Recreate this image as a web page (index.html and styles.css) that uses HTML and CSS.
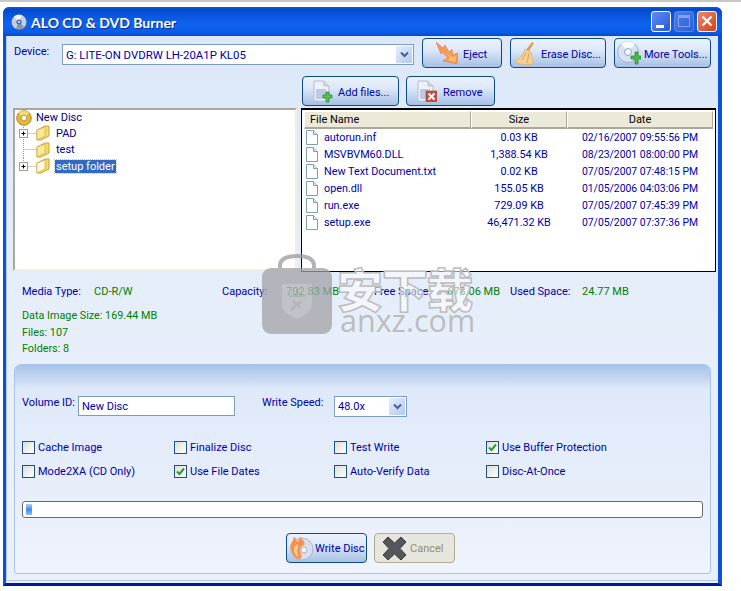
FILE: index.html
```html
<!DOCTYPE html>
<html lang="en">
<head>
<meta charset="utf-8">
<title>ALO CD &amp; DVD Burner</title>
<link rel="stylesheet" href="styles.css">
</head>
<body>
<div class="strip"></div>
<div class="window">
  <div class="titlebar">
    <svg class="title-icon" width="16" height="16" viewBox="0 0 16 16"><circle cx="8" cy="8" r="7.5" fill="#c9ccd4"/><path d="M8 8L3 3A7 7 0 0 1 11 1.5Z" fill="#f4f4f8"/><path d="M8 8L13 13A7 7 0 0 1 5 14.5Z" fill="#8f95a6"/><circle cx="8" cy="8" r="2.6" fill="#3f6fd0"/><circle cx="8" cy="8" r="1.1" fill="#e8eefa"/></svg>
    <span class="title-text">ALO CD &amp; DVD Burner</span>
    <div class="win-btns">
      <span class="win-btn win-min"><span class="min-bar"></span></span>
      <span class="win-btn win-max"><span class="max-box"></span></span>
      <span class="win-btn win-close"><svg width="12" height="12" viewBox="0 0 12 12"><path d="M1.5 1.5L10.5 10.5M10.5 1.5L1.5 10.5" stroke="#fff" stroke-width="2.2"/></svg></span>
    </div>
  </div>
  <div class="client">
    <div class="device-row">
      <span class="device-label">Device:</span>
      <div class="select device-select"><span class="select-value">G: LITE-ON DVDRW LH-20A1P KL05</span><span class="select-arrow"><svg width="9" height="7" viewBox="0 0 9 7"><path d="M1 1.5L4.5 5L8 1.5" fill="none" stroke="#4d6185" stroke-width="2"/></svg></span></div>
      <button class="btn btn-eject"><svg width="22" height="22" viewBox="0 0 22 22"><path d="M0 0L7 6L9 3L13 10L16 7.500L17 13L22 11L21 22L7 19L12 15.500L6 10L5 12Z" fill="#f59a58" stroke="#ee7c5a" stroke-width=".7"/><path d="M8 9L13 13L17 15L20 14L19.500 20L11 18L14 15.500Z" fill="#f9c05c"/></svg><span>Eject</span></button>
      <button class="btn btn-erase"><svg width="22" height="23" viewBox="0 0 22 23"><path d="M18 0L20 1L15 9L12 8Z" fill="#d8a050"/><path d="M11 7L17 10C18 14 19 19 19 22C13 23 5 23 0 19C5 18 9 13 11 7Z" fill="#f4d090" stroke="#dcb070" stroke-width=".7"/><path d="M8 18L12 11M13 21L15 11" stroke="#dca464" fill="none"/></svg><span>Erase Disc...</span></button>
      <button class="btn btn-tools"><svg width="24" height="24" viewBox="0 0 24 24"><circle cx="11" cy="11" r="10.500" fill="#d6e2f2" stroke="#9fb2cc"/><path d="M11 11L4 3A10 10 0 0 1 18 3Z" fill="#f6f9fd"/><circle cx="11" cy="11" r="3.500" fill="#f4f6fb" stroke="#8ea2c2"/><path d="M14 15h4v-4h3v4h3v3h-3v5h-3v-5h-4z" fill="#4cb848" stroke="#2d8a3a" stroke-width=".8"/></svg><span>More Tools...</span></button>
    </div>
    <div class="action-row">
      <button class="btn btn-add"><svg width="20" height="23" viewBox="0 0 20 23"><path d="M1 1H11L16 6V21H1Z" fill="#eef2f8" stroke="#aebdd2"/><path d="M11 1V6H16" fill="#cfdaea" stroke="#aebdd2"/><path d="M3 9H13V19H3Z" fill="#bccbe2"/><path d="M10 15h3v-3h3v3h3v3h-3v4h-3v-4h-3z" fill="#55c050" stroke="#2d8a3a" stroke-width=".8"/></svg><span>Add files...</span></button>
      <button class="btn btn-remove"><svg width="20" height="22" viewBox="0 0 20 22"><path d="M1 1H11L16 6V21H1Z" fill="#eef2f8" stroke="#aebdd2"/><path d="M11 1V6H16" fill="#cfdaea" stroke="#aebdd2"/><path d="M3 9H13V19H3Z" fill="#bccbe2"/><rect x="9" y="11" width="11" height="11" fill="#cc4d3c" stroke="#a83a2c" stroke-width=".6"/><path d="M11.500 13.500L17.500 19.500M17.500 13.500L11.500 19.500" stroke="#fff" stroke-width="2"/></svg><span>Remove</span></button>
    </div>
    <div class="panes">
      <div class="tree">
        <div class="tree-root"><svg width="16" height="16" viewBox="0 0 16 16"><circle cx="8" cy="8" r="7.300" fill="#e8b72e" stroke="#a98a3a"/><path d="M8 8L2.500 3A7 7 0 0 1 13 3Z" fill="#f6dc72"/><circle cx="8" cy="8" r="2.800" fill="#fff" stroke="#b89a50"/></svg><span class="tree-label tree-root-label">New Disc</span></div>
        <div class="tree-row"><svg class="tree-lines" width="18" height="17" viewBox="0 0 18 17"><path d="M4.500 0V17M4.500 8.500H18" stroke="#9a9a8e" stroke-dasharray="1 1"/><rect x=".5" y="4.500" width="8" height="8" fill="#fff" stroke="#a0a090"/><path d="M2.500 8.500H6.500M4.500 6.500V10.500" stroke="#000"/></svg><svg class="folder" width="14" height="16" viewBox="0 0 14 16"><path d="M1 5L9 1H13V11L5 15H1Z" fill="#f7d864" stroke="#c9a438"/><path d="M1 5L9 2V11L1 15Z" fill="#fce89a" stroke="#c9a438" stroke-width=".6"/></svg><span class="tree-label">PAD</span></div>
        <div class="tree-row"><svg class="tree-lines" width="18" height="17" viewBox="0 0 18 17"><path d="M4.500 0V17M4.500 8.500H18" stroke="#9a9a8e" stroke-dasharray="1 1"/></svg><svg class="folder" width="14" height="16" viewBox="0 0 14 16"><path d="M1 5L9 1H13V11L5 15H1Z" fill="#f7d864" stroke="#c9a438"/><path d="M1 5L9 2V11L1 15Z" fill="#fce89a" stroke="#c9a438" stroke-width=".6"/></svg><span class="tree-label">test</span></div>
        <div class="tree-row"><svg class="tree-lines" width="18" height="17" viewBox="0 0 18 17"><path d="M4.500 0V8.500M4.500 8.500H18" stroke="#9a9a8e" stroke-dasharray="1 1"/><rect x=".5" y="4.500" width="8" height="8" fill="#fff" stroke="#a0a090"/><path d="M2.500 8.500H6.500M4.500 6.500V10.500" stroke="#000"/></svg><svg class="folder" width="14" height="16" viewBox="0 0 14 16"><path d="M1 5L9 1H13V11L5 15H1Z" fill="#f7d864" stroke="#c9a438"/><path d="M1 5L9 2V11L1 15Z" fill="#fffbe0" stroke="#c9a438" stroke-width=".6"/></svg><span class="tree-label tree-selected">setup folder</span></div>
      </div>
      <div class="list">
        <div class="list-head"><span class="col-name">File Name</span><span class="col-size">Size</span><span class="col-date">Date</span></div>
        <div class="list-row"><span class="cell-name"><svg class="doc" width="12" height="15" viewBox="0 0 12 15"><path d="M.5.5H7.500L11.500 4.500V14.500H.5Z" fill="#fff" stroke="#7f9db9"/><path d="M7.500.5V4.500H11.500" fill="#dce6f4" stroke="#7f9db9"/></svg>autorun.inf</span><span class="cell-size">0.03 KB</span><span class="cell-date">02/16/2007 09:55:56 PM</span></div>
        <div class="list-row"><span class="cell-name"><svg class="doc" width="12" height="15" viewBox="0 0 12 15"><path d="M.5.5H7.500L11.500 4.500V14.500H.5Z" fill="#fff" stroke="#7f9db9"/><path d="M7.500.5V4.500H11.500" fill="#dce6f4" stroke="#7f9db9"/></svg>MSVBVM60.DLL</span><span class="cell-size">1,388.54 KB</span><span class="cell-date">08/23/2001 08:00:00 PM</span></div>
        <div class="list-row"><span class="cell-name"><svg class="doc" width="12" height="15" viewBox="0 0 12 15"><path d="M.5.5H7.500L11.500 4.500V14.500H.5Z" fill="#fff" stroke="#7f9db9"/><path d="M7.500.5V4.500H11.500" fill="#dce6f4" stroke="#7f9db9"/></svg>New Text Document.txt</span><span class="cell-size">0.02 KB</span><span class="cell-date">07/05/2007 07:48:15 PM</span></div>
        <div class="list-row"><span class="cell-name"><svg class="doc" width="12" height="15" viewBox="0 0 12 15"><path d="M.5.5H7.500L11.500 4.500V14.500H.5Z" fill="#fff" stroke="#7f9db9"/><path d="M7.500.5V4.500H11.500" fill="#dce6f4" stroke="#7f9db9"/></svg>open.dll</span><span class="cell-size">155.05 KB</span><span class="cell-date">01/05/2006 04:03:06 PM</span></div>
        <div class="list-row"><span class="cell-name"><svg class="doc" width="12" height="15" viewBox="0 0 12 15"><path d="M.5.5H7.500L11.500 4.500V14.500H.5Z" fill="#fff" stroke="#7f9db9"/><path d="M7.500.5V4.500H11.500" fill="#dce6f4" stroke="#7f9db9"/></svg>run.exe</span><span class="cell-size">729.09 KB</span><span class="cell-date">07/05/2007 07:45:39 PM</span></div>
        <div class="list-row"><span class="cell-name"><svg class="doc" width="12" height="15" viewBox="0 0 12 15"><path d="M.5.5H7.500L11.500 4.500V14.500H.5Z" fill="#fff" stroke="#7f9db9"/><path d="M7.500.5V4.500H11.500" fill="#dce6f4" stroke="#7f9db9"/></svg>setup.exe</span><span class="cell-size">46,471.32 KB</span><span class="cell-date">07/05/2007 07:37:36 PM</span></div>
      </div>
    </div>
    <div class="media-info">
      <span class="blue">Media Type:</span><span class="green">CD-R/W</span>
      <span class="blue">Capacity:</span><span class="green">702.83 MB</span>
      <span class="blue">Free Space:</span><span class="green">678.06 MB</span>
      <span class="blue">Used Space:</span><span class="green">24.77 MB</span>
    </div>
    <div class="data-info green">
      <div>Data Image Size: 169.44 MB</div>
      <div>Files: 107</div>
      <div>Folders: 8</div>
    </div>
    <div class="panel">
      <div class="panel-head"></div>
      <div class="panel-body">
        <div class="volume-row">
          <span class="field-label label-volume">Volume ID:</span>
          <div class="text-input">New Disc</div>
          <span class="field-label label-speed">Write Speed:</span>
          <div class="select speed-select"><span class="select-value">48.0x</span><span class="select-arrow"><svg width="9" height="7" viewBox="0 0 9 7"><path d="M1 1.500L4.500 5L8 1.500" fill="none" stroke="#4d6185" stroke-width="2"/></svg></span></div>
        </div>
        <div class="options">
          <label class="opt"><span class="check"></span>Cache Image</label>
          <label class="opt"><span class="check"></span>Finalize Disc</label>
          <label class="opt"><span class="check"></span>Test Write</label>
          <label class="opt"><span class="check"><svg width="9" height="9" viewBox="0 0 9 9"><path d="M1 4.500L3.500 7L8 1.500" fill="none" stroke="#21a121" stroke-width="2"/></svg></span>Use Buffer Protection</label>
          <label class="opt"><span class="check"></span>Mode2XA (CD Only)</label>
          <label class="opt"><span class="check"><svg width="9" height="9" viewBox="0 0 9 9"><path d="M1 4.500L3.500 7L8 1.500" fill="none" stroke="#21a121" stroke-width="2"/></svg></span>Use File Dates</label>
          <label class="opt"><span class="check"></span>Auto-Verify Data</label>
          <label class="opt"><span class="check"></span>Disc-At-Once</label>
        </div>
        <div class="progress"><span class="progress-fill"></span></div>
        <div class="bottom-btns">
          <button class="btn btn-write"><svg width="26" height="26" viewBox="0 0 26 26"><circle cx="14" cy="14" r="11" fill="#d9dff0" stroke="#aab4cc"/><circle cx="16" cy="15" r="3" fill="#f2f4fb" stroke="#aab4cc"/><path d="M3 15C1 9 5 8 6 2C8 4 9 5 9 7C11 6 12 4 12 2C15 5 17 7 16 10C14 10 12 12 12 15C12 19 15 21 12 24C7 24 4 20 3 15Z" fill="#f2905a" stroke="#e8b070" stroke-width=".8"/><path d="M6 15C6 11 8 11 9 9C11 11 10 13 9 15C9 18 10 20 11 22C8 21 6 18 6 15Z" fill="#f8d090"/></svg><span>Write Disc</span></button>
          <button class="btn btn-cancel"><svg width="25" height="25" viewBox="0 0 25 25"><path d="M6 1L12.500 7L19 1L24 6L18 12.500L24 19L19 24L12.500 18L6 24L1 19L7 12.500L1 6Z" fill="#55565a" stroke="#3a3a3c" stroke-linejoin="round"/></svg><span>Cancel</span></button>
        </div>
      </div>
    </div>
  </div>
</div>
<div class="watermark">
  <svg class="wm-lock" width="70" height="80" viewBox="0 0 70 80"><path d="M18 16V12C18 4 26 2 35 2C44 2 52 4 52 12V16" fill="none" stroke="#9a9a9e" stroke-width="4"/><rect x="0" y="14" width="70" height="66" rx="9" fill="#a2a2a6"/><path d="M20 30H50V50C50 58 42 62 35 65C28 62 20 58 20 50Z" fill="#b4b4b8"/><path d="M35 36V40M27 42H43M31 47L39 54M39 47L29 56" stroke="#a2a2a6" stroke-width="2.500" fill="none"/></svg>
  <span class="wm-cn">安下载</span>
  <span class="wm-en">anxz.com</span>
</div>
</body>
</html>
```
FILE: styles.css
```css
* { box-sizing: border-box; }
html, body { margin: 0; padding: 0; }
body {
  position: relative;
  width: 741px;
  height: 591px;
  overflow: hidden;
  background: #fff;
  font-family: Roboto, "Liberation Sans", Arial, sans-serif;
  font-size: 11px;
  color: #0000a8;
}
.strip { height: 2px; background: #c8c8c8; }
.window {
  margin: 5px 0 0 3px;
  width: 719px;
  height: 579px;
  display: flex;
  flex-direction: column;
  background: #0a4fd8;
  border-radius: 7px 7px 0 0;
  border-left: 3px solid #0a52dc;
  border-right: 4px solid #0a52dc;
  border-bottom: 3px solid #00189c;
}
.titlebar {
  height: 29px;
  flex: none;
  margin: 0 -4px 0 -3px;
  padding: 0 5px 0 8px;
  display: flex;
  align-items: center;
  border-radius: 6px 6px 0 0;
  background: linear-gradient(#0a5ee0 0, #0348c8 8%, #0a56e0 30%, #0f63ee 60%, #0a5ce6 88%, #0648ca 100%);
}
.title-icon { flex: none; margin-right: 4px; margin-top: 1px; }
.title-text {
  font: bold 14px Lato, "Open Sans", sans-serif;
  color: #fff;
  text-shadow: 1px 1px 0 #0a2f90;
  margin-top: 2px;
}
.win-btns { margin-left: auto; display: flex; gap: 3px; margin-top: -1px; }
.win-btn {
  width: 20px;
  height: 21px;
  border: 1px solid #fff;
  border-radius: 3px;
  display: flex;
  align-items: center;
  justify-content: center;
  background: linear-gradient(135deg, #5f8df0, #2a58d8);
}
.win-max { border-color: #5b86e6; background: linear-gradient(135deg, #4f7fe6, #2d5fd8); }
.win-close { background: linear-gradient(135deg, #ec8a68, #d63e18); }
.min-bar { width: 8px; height: 3px; background: #fff; align-self: flex-end; margin: 0 2px 3px 0; }
.max-box { width: 12px; height: 12px; border: 1px solid #7fa3ee; border-top-width: 3px; }

.client {
  flex: 1;
  display: flex;
  flex-direction: column;
  padding: 2px 2px 0 7px;
  background: linear-gradient(#dce8f9, #e8effb 60%, #eaf0fb);
  min-height: 0;
  border-bottom: 2px solid #e8f0f8;
  box-shadow: inset 0 -1px 0 #b4cce8, inset 1px 0 0 #b4cce8;
}
.device-row { display: flex; align-items: flex-start; height: 30px; padding-right: 5px; }
.device-label { width: 48px; margin: 7px 0 0 1px; line-height: 14px; }
.select {
  display: flex;
  align-items: center;
  background: #fff;
  border: 1px solid #7f9db9;
}
.select-value { flex: 1; padding-left: 3px; }
.select-arrow {
  width: 16px;
  height: 17px;
  margin-right: 1px;
  display: flex;
  align-items: center;
  justify-content: center;
  background: linear-gradient(135deg, #e6eefd, #b2c9f4);
}
.device-select { width: 352px; height: 21px; margin: 6px 8px 0 0; font-size: 11.4px; }
.btn {
  height: 30px;
  padding: 0;
  display: flex;
  align-items: center;
  font: inherit;
  color: inherit;
  border: 1px solid #0d4a7f;
  border-radius: 4px;
  background: linear-gradient(#ecf2fc, #dde8f8 40%, #a6c0e7);
}
.btn svg { flex: none; }
.btn span { white-space: nowrap; padding-top: 3px; }
.bottom-btns .btn span { padding-top: 1px; }
.btn-eject { width: 80px; margin-right: 8px; padding-left: 13px; gap: 5px; }
.btn-erase { width: 96px; margin-right: 8px; padding-left: 3px; gap: 5px; }
.btn-tools { width: 97px; padding-left: 2px; gap: 3px; }
.action-row { display: flex; gap: 7px; margin: 8px 0 2px 289px; }
.btn-add { width: 97px; padding-left: 10px; gap: 5px; }
.btn-remove { width: 89px; padding-left: 10px; gap: 6px; }

.panes { display: flex; gap: 4px; height: 164px; flex: none; }
.tree {
  width: 284px;
  height: 163px;
  padding: 0 0 0 1px;
  background: #fff;
  border: 2px solid;
  border-color: #aca899 #f1efe2 #f1efe2 #aca899;
}
.tree-root { height: 15px; display: flex; align-items: center; }
.tree-root-label { margin-left: 4px; }
.tree-row { height: 16.5px; display: flex; align-items: center; padding-left: 3px; }
.tree-lines { flex: none; }
.folder { flex: none; margin-left: -1px; }
.tree-label { color: #000084; }
.tree-row .tree-label { margin-left: 5px; padding: 0 1px; }
.tree-row .tree-selected {
  background: #316ac5;
  color: #fff;
  outline: 1px dotted #e0c060;
}
.list {
  flex: 1;
  background: #fff;
  border: 1px solid #000;
  border-top-width: 2px;
  padding: 1px 2px 0 2px;
}
.list-head {
  display: grid;
  grid-template-columns: 167px 96px 146px;
  height: 18px;
  background: #ece9d8;
  color: #000;
  line-height: 15px;
}
.list-head span { text-align: center; border: 1px solid; border-color: #fff #aca899 #aca899 #fff; border-bottom-width: 2px; }
.list-head .col-name { text-align: left; padding-left: 5px; }
.list-row {
  display: grid;
  grid-template-columns: 167px 96px 146px;
  height: 17px;
  align-items: center;
  font-size: 10.8px;
}
.cell-name { display: flex; align-items: center; gap: 6px; padding-left: 2px; white-space: nowrap; }
.cell-size, .cell-date { text-align: center; white-space: nowrap; }
.list-row .cell-date { font-size: 10.4px; }
.doc { flex: none; }

.blue { color: #0000a8; }
.green { color: #008000; }
.media-info {
  display: grid;
  grid-template-columns: 72px 128px 64px 88px 73px 63px 72px auto;
  margin: 13px 0 0 9px;
  height: 14px;
  line-height: 14px;
}
.data-info { margin: 9px 0 0 9px; line-height: 16.500px; height: 50px; font-size: 10.8px; }
.panel {
  margin: 6px 5px 0 1px;
  height: 210px;
  border: 1px solid #a9c4e9;
  border-radius: 7px 7px 3px 3px;
  background: linear-gradient(#dce8f9, #eff3fc);
  overflow: hidden;
}
.panel-head { height: 24px; background: linear-gradient(#a8c3e8, #dde8f8); }
.panel-body { padding: 7px 7px 0 7px; }
.volume-row { display: flex; align-items: flex-start; }
.field-label { line-height: 14px; white-space: nowrap; }
.label-volume { width: 56px; }
.text-input {
  width: 157px;
  height: 20px;
  margin-right: 27px;
  padding-left: 3px;
  line-height: 19px;
  background: #fff;
  border: 1px solid #7f9db9;
}
.label-speed { width: 72px; }
.speed-select { width: 73px; height: 21px; }
.options {
  display: grid;
  grid-template-columns: 152px 160px 152px auto;
  grid-auto-rows: 24px;
  margin-top: 18px;
}
.opt { display: flex; align-items: center; gap: 3px; white-space: nowrap; }
.check {
  width: 13px;
  height: 13px;
  display: flex;
  align-items: center;
  justify-content: center;
  border: 1px solid #1c5180;
  background: linear-gradient(135deg, #dcdcd7, #fff);
}
.progress {
  height: 17px;
  margin-top: 18px;
  padding: 2px 3px;
  background: #fff;
  border: 1px solid #686868;
  border-radius: 3px;
  display: flex;
}
.progress-fill { width: 6px; height: 11px; background: linear-gradient(#a8d0f8, #3a8ef0 50%, #8cc0f4); }
.bottom-btns { display: flex; justify-content: center; gap: 7px; margin-top: 15px; padding-left: 16px; }
.btn-write { width: 81px; padding-left: 1px; gap: 1px; }
.btn-cancel {
  width: 81px;
  padding-left: 7px;
  gap: 3px;
  color: #8c8c70;
  background: #e6e6df;
  border-color: #b0ae90;
}

.watermark { position: absolute; left: 262px; top: 254px; width: 220px; height: 84px; }
.wm-lock { position: absolute; left: 0; top: 0; opacity: .75; }
.wm-cn {
  position: absolute;
  left: 75px;
  top: 9px;
  font: 900 46px/48px "Noto Sans CJK SC", sans-serif;
  color: rgba(255, 255, 255, .55);
  -webkit-text-stroke: 1.5px #bdbdbd;
  letter-spacing: -1px;
}
.wm-en {
  position: absolute;
  left: 78px;
  top: 48px;
  font: 30.5px/36px "Open Sans", sans-serif;
  color: #b8b8b8;
  opacity: .9;
}
```
